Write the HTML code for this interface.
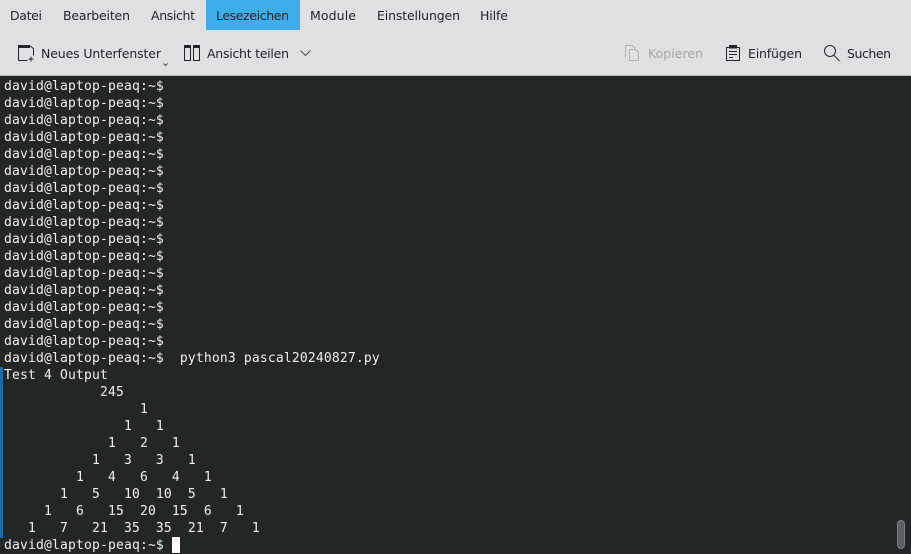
<!DOCTYPE html>
<html>
<head>
<meta charset="utf-8">
<style>
html,body{margin:0;padding:0;width:911px;height:554px;overflow:hidden;background:#232627}
#top{position:absolute;left:0;top:0;width:911px;height:76px}
#term{position:absolute;left:0;top:77px;width:911px;height:477px;background:#232627}
pre{position:absolute;left:4px;top:1px;margin:0;font-family:"DejaVu Sans Mono","Liberation Mono",monospace;font-size:13px;letter-spacing:.17px;line-height:17px;color:#eff0f1}
#bar{position:absolute;left:0;top:290px;width:3px;height:171px;background:#1d6ca8}
#cur{position:absolute;left:172px;top:460px;width:8px;height:16px;background:#fcfcfc}
#sb{position:absolute;left:897px;top:443px;width:6px;height:27px;background:#5b5e60;border:1px solid #7e8183;border-radius:4px}
svg text{font-family:"DejaVu Sans","Liberation Sans",sans-serif;font-size:12.5px;fill:#232629}
</style>
</head>
<body>
<svg id="top" width="911" height="76" viewBox="0 0 911 76" xmlns="http://www.w3.org/2000/svg">
<rect width="911" height="76" fill="#dee0e2"/>
<rect y="75" width="911" height="1" fill="#b4b6b8"/>
<rect x="206" y="0" width="94" height="30" fill="#3daee9"/>
<text x="10" y="20" textLength="32">Datei</text>
<text x="63" y="20" textLength="67">Bearbeiten</text>
<text x="151" y="20" textLength="44">Ansicht</text>
<text x="216" y="20" textLength="73">Lesezeichen</text>
<text x="310" y="20" textLength="46">Module</text>
<text x="377" y="20" textLength="83">Einstellungen</text>
<text x="480" y="20" textLength="28">Hilfe</text>

<g fill="none" stroke="#232629" stroke-width="1">
<path d="M18.5 60.5V45.5H29.5L33.5 48.5V55.5M18.5 60.5H27.5"/>
<path d="M31 56.5V61.5M28.5 59H33.5"/>
</g>
<rect x="18" y="45" width="12" height="3" fill="#232629"/>
<text x="41" y="58" textLength="120">Neues Unterfenster</text>
<path d="M163.5 63.5L165.5 65.5L167.5 63.5" fill="none" stroke="#4d4d4d"/>

<g fill="none" stroke="#232629">
<rect x="184.5" y="46.5" width="6" height="14"/>
<rect x="193.5" y="46.5" width="6" height="14"/>
</g>
<rect x="184" y="45" width="7" height="3" fill="#232629"/>
<rect x="193" y="45" width="7" height="3" fill="#232629"/>
<text x="207" y="58" textLength="82">Ansicht teilen</text>
<path d="M300.5 50.5L305.5 55.5L310.5 50.5" fill="none" stroke="#4d4f52"/>

<g fill="none" stroke="#b3b5b7">
<path d="M625.5 57.5V45.5H632.5L634.5 47.5V49"/>
<path d="M629.5 49.5H635.5L638.5 52.5V60.5H629.5Z" fill="#dee0e2"/>
</g>
<text x="648" y="58" textLength="55" style="fill:#a4a6a8">Kopieren</text>

<g fill="none" stroke="#232629">
<rect x="726.5" y="47.5" width="13" height="13"/>
<path d="M729 51.5H737M729 54.5H737M729 57.5H733"/>
</g>
<rect x="729" y="45" width="8" height="3.5" fill="#232629"/>
<text x="748" y="58" textLength="54">Einfügen</text>

<circle cx="830" cy="51" r="5.5" fill="none" stroke="#232629"/>
<path d="M834 55.5L839.5 61" fill="none" stroke="#232629"/>
<text x="847" y="58" textLength="44">Suchen</text>
</svg>

<div id="term">
<pre>david@laptop-peaq:~$
david@laptop-peaq:~$
david@laptop-peaq:~$
david@laptop-peaq:~$
david@laptop-peaq:~$
david@laptop-peaq:~$
david@laptop-peaq:~$
david@laptop-peaq:~$
david@laptop-peaq:~$
david@laptop-peaq:~$
david@laptop-peaq:~$
david@laptop-peaq:~$
david@laptop-peaq:~$
david@laptop-peaq:~$
david@laptop-peaq:~$
david@laptop-peaq:~$
david@laptop-peaq:~$  python3 pascal20240827.py
Test 4 Output
            245
                 1
               1   1
             1   2   1
           1   3   3   1
         1   4   6   4   1
       1   5   10  10  5   1
     1   6   15  20  15  6   1
   1   7   21  35  35  21  7   1
david@laptop-peaq:~$</pre>
<div id="bar"></div>
<div id="cur"></div>
<div id="sb"></div>
</div>
</body>
</html>
